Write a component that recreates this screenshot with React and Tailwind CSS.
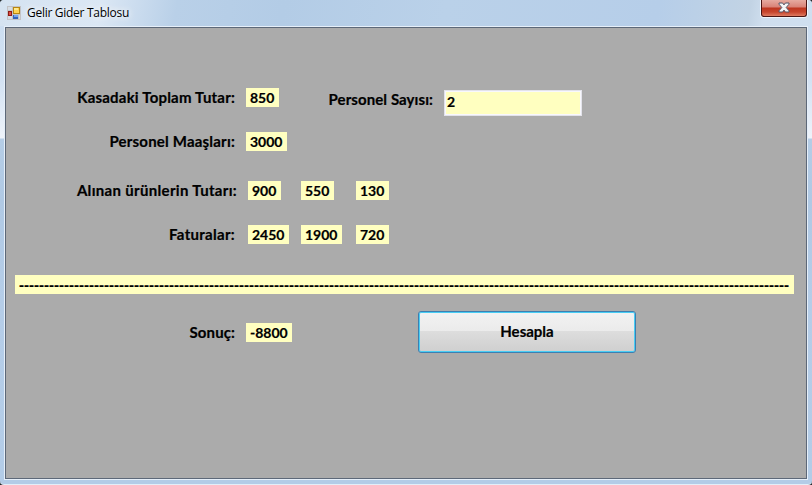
import React from "react";

function Value({ className, children }) {
  return (
    <span className={`flex h-[19px] shrink-0 items-center bg-[#ffffc0] pl-1 whitespace-nowrap ${className}`}>
      {children}
    </span>
  );
}

function Label({ className, children }) {
  return (
    <span className={`flex h-[19px] shrink-0 items-center justify-end text-[15px] whitespace-nowrap ${className}`}>
      {children}
    </span>
  );
}

function FormIcon() {
  return (
    <svg width="14" height="14" viewBox="0 0 14 14" shapeRendering="crispEdges">
      <rect width="14" height="14" fill="#c3c3c5" />
      <rect x="1" y="1" width="4" height="3" fill="#d5dce4" />
      <rect x="1" y="10" width="4" height="3" fill="#d5dce4" />
      <rect x="1" y="5" width="4" height="5" fill="#8e1b15" />
      <rect x="2" y="6" width="2" height="3" fill="#df4e40" />
      <rect x="6" y="1" width="7" height="7" fill="#b8860f" />
      <rect x="7" y="2" width="5" height="5" fill="#ffd34f" />
      <rect x="7" y="2" width="4" height="2" fill="#ffe98e" />
      <rect x="6" y="9" width="5" height="4" fill="#3563b8" />
      <rect x="7" y="9" width="4" height="2" fill="#71a4ee" />
      <rect x="12" y="9" width="1" height="4" fill="#d5dce4" />
    </svg>
  );
}

export default function App() {
  return (
    <div className="w-[812px] bg-[#23292b]">
      <div className="flex h-[485px] w-[812px] flex-col overflow-hidden rounded-[4px] border-b border-[#e3eef8] bg-[linear-gradient(to_bottom,#c9dcf0_0px,#d3e2f3_80px,#eef3fa_138px,#b5cde6_139px,#b0c9e4_200px,#b5cde8_300px,#b3cce7_485px)] font-['Lato','Liberation_Sans',sans-serif]">
        <header className="flex h-[26px] shrink-0 bg-[linear-gradient(100deg,#d5e3f1_0px,#dbe7f4_100px,#b9d0e8_175px,#b3cce6_280px,#bad1e9_440px,#b6cee9_650px,#c2d3e4_740px,#cfdeee_755px,#cfdff0_812px)] pl-[7px]">
          <div className="mt-[6px]"><FormIcon /></div>
          <h1 className="mt-[5px] ml-[6px] h-4 w-[106px] font-['Open_Sans','Noto_Sans',sans-serif] text-[12px] leading-4 tracking-[-0.28px] whitespace-nowrap text-black [text-shadow:0_0_6px_#fff,0_0_10px_#fff]">
            Gelir Gider Tablosu
          </h1>
          <button className="mr-[4px] ml-auto flex h-[18px] w-[48px] rounded-b-[4px] border border-t-0 border-[#f1f5fa]">
            <span className="flex h-[17px] w-[46px] items-start justify-center rounded-b-[3px] border border-t-0 border-[#4b1513] bg-[linear-gradient(to_bottom,#e6aaa0_0px,#d98377_7px,#bd3620_8px,#c7452d_12px,#df7b61_16px)]">
              <svg className="mt-[2px]" width="12" height="11" viewBox="0 0 12 11">
                <path d="M1 1h3.6L6 2.9 7.4 1H11v1.2L8.2 5.5 11 8.8V10H7.4L6 8.1 4.6 10H1V8.8l2.8-3.3L1 2.2z" fill="#f5f5f7" stroke="#535669" />
              </svg>
            </span>
          </button>
        </header>
        <div className="ml-1 h-[454px] w-[804px] shrink-0 border border-[#e6eff9]">
          <main className="flex h-[452px] w-[802px] flex-col border border-[#5d6878] bg-[#ababab] text-[14px] leading-[19px] font-bold text-black [-webkit-text-stroke:0.2px_black]">
            <div className="mt-[60px] flex h-[28px] shrink-0 items-start">
              <Label className="w-[229px] tracking-[0.2px]">Kasadaki Toplam Tutar:</Label>
              <Value className="ml-[11px] w-[33px]">850</Value>
              <Label className="mt-[2px] w-[154px] tracking-[0.08px]">Personel Sayısı:</Label>
              <input
                className="mt-[2px] ml-[11px] h-[26px] w-[138px] border border-[#e3e3eb] bg-[#ffffc0] pb-[3px] pl-[2px] outline-none [box-shadow:inset_0_0_0_1px_#f8f8fd]"
                defaultValue="2"
              />
            </div>
            <div className="mt-[16px] flex h-[19px] shrink-0">
              <Label className="w-[229px] tracking-[0.2px]">Personel Maaşları:</Label>
              <Value className="ml-[11px] w-[41px]">3000</Value>
            </div>
            <div className="mt-[30px] flex h-[19px] shrink-0">
              <Label className="w-[231px] tracking-[0.32px]">Alınan ürünlerin Tutarı:</Label>
              <Value className="ml-[11px] w-[33px]">900</Value>
              <Value className="ml-[20px] w-[33px]">550</Value>
              <Value className="ml-[22px] w-[33px]">130</Value>
            </div>
            <div className="mt-[25px] flex h-[19px] shrink-0">
              <Label className="w-[229px] tracking-[0.3px]">Faturalar:</Label>
              <Value className="ml-[13px] w-[41px]">2450</Value>
              <Value className="ml-[12px] w-[41px]">1900</Value>
              <Value className="ml-[14px] w-[33px]">720</Value>
            </div>
            <div className="mt-[31px] ml-[9px] flex shrink-0">
              <Value className="w-[779px] font-['Liberation_Sans',sans-serif] text-[15px] tracking-[0.005px]">{"-".repeat(154)}</Value>
            </div>
            <div className="mt-[17px] flex shrink-0 items-start">
              <Label className="mt-[12px] w-[229px] tracking-[0.1px]">Sonuç:</Label>
              <Value className="mt-[12px] ml-[11px] w-[46px]">-8800</Value>
              <button className="ml-[126px] h-[42px] w-[218px] rounded-[3px] border border-[#3c7fb1] bg-[linear-gradient(to_bottom,#f2f2f2_0%,#ebebeb_47%,#dddddd_48%,#cfcfcf_100%)] pb-[2px] text-[15px] [box-shadow:inset_0_0_0_1px_#48cdf4]">
                Hesapla
              </button>
            </div>
          </main>
        </div>
      </div>
    </div>
  );
}
